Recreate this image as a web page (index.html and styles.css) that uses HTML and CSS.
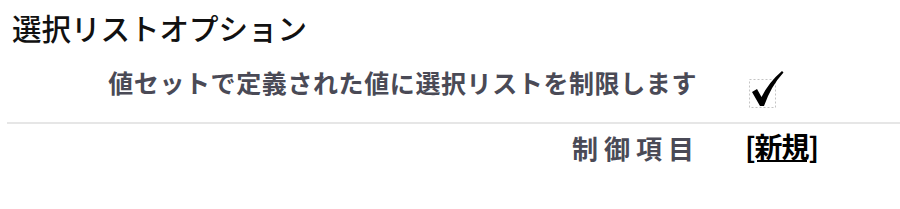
FILE: index.html
```html
<!DOCTYPE html>
<html lang="ja">
<head>
<meta charset="utf-8">
<link rel="stylesheet" href="styles.css">
</head>
<body>
<div class="page">
  <h2 class="title">選択リストオプション</h2>
  <div class="row row-first">
    <div class="label wide">値セットで定義された値に選択リストを制限します</div>
    <div class="data">
      <span class="check">
        <svg width="36" height="40" viewBox="0 0 36 40">
          <rect x="0.5" y="10.5" width="26" height="28" fill="none" stroke="#c4c4c4" stroke-width="1" stroke-dasharray="2 2"/>
          <path d="M3 23 L8 20 L12.5 28 Q20 13 33 2 L34.5 3.5 Q22 17 15 37 L11 37 Z" fill="#000"/>
        </svg>
      </span>
    </div>
  </div>
  <div class="row">
    <div class="label spaced">制御項目</div>
    <div class="data"><a class="link" href="#">[新規]</a></div>
  </div>
</div>
</body>
</html>
```
FILE: styles.css
```css
html, body {
  margin: 0;
  padding: 0;
  background: #fff;
}
.page {
  font-family: "Noto Sans CJK JP", "Noto Sans", sans-serif;
  width: 900px;
  height: 209px;
  overflow: hidden;
}
.title {
  margin: 0;
  padding: 7px 0 0 12px;
  font-size: 29.5px;
  font-weight: 500;
  line-height: 40px;
  color: #111;
  letter-spacing: 0;
}
.row {
  display: grid;
  grid-template-columns: 700px 1fr;
  margin-left: 7px;
}
.row-first {
  border-bottom: 2px solid #e6e6e6;
  height: 75px;
}
.label {
  text-align: right;
  font-weight: 700;
  color: #4a4a56;
  padding-right: 10px;
}
.wide {
  font-size: 25px;
  letter-spacing: 0.6px;
  line-height: 36px;
  padding-top: 17px;
}
.spaced {
  font-size: 26px;
  letter-spacing: 6px;
  line-height: 36px;
  padding-top: 6px;
  padding-right: 7px;
}
.data {
  padding-left: 42px;
}
.check {
  display: block;
  padding-top: 22px;
}
.check svg {
  display: block;
}
.link {
  display: inline-block;
  color: #000;
  font-size: 28px;
  font-weight: 700;
  line-height: 36px;
  padding-top: 4px;
  margin-left: -4px;
  text-decoration: underline;
  letter-spacing: -1px;
}
```
